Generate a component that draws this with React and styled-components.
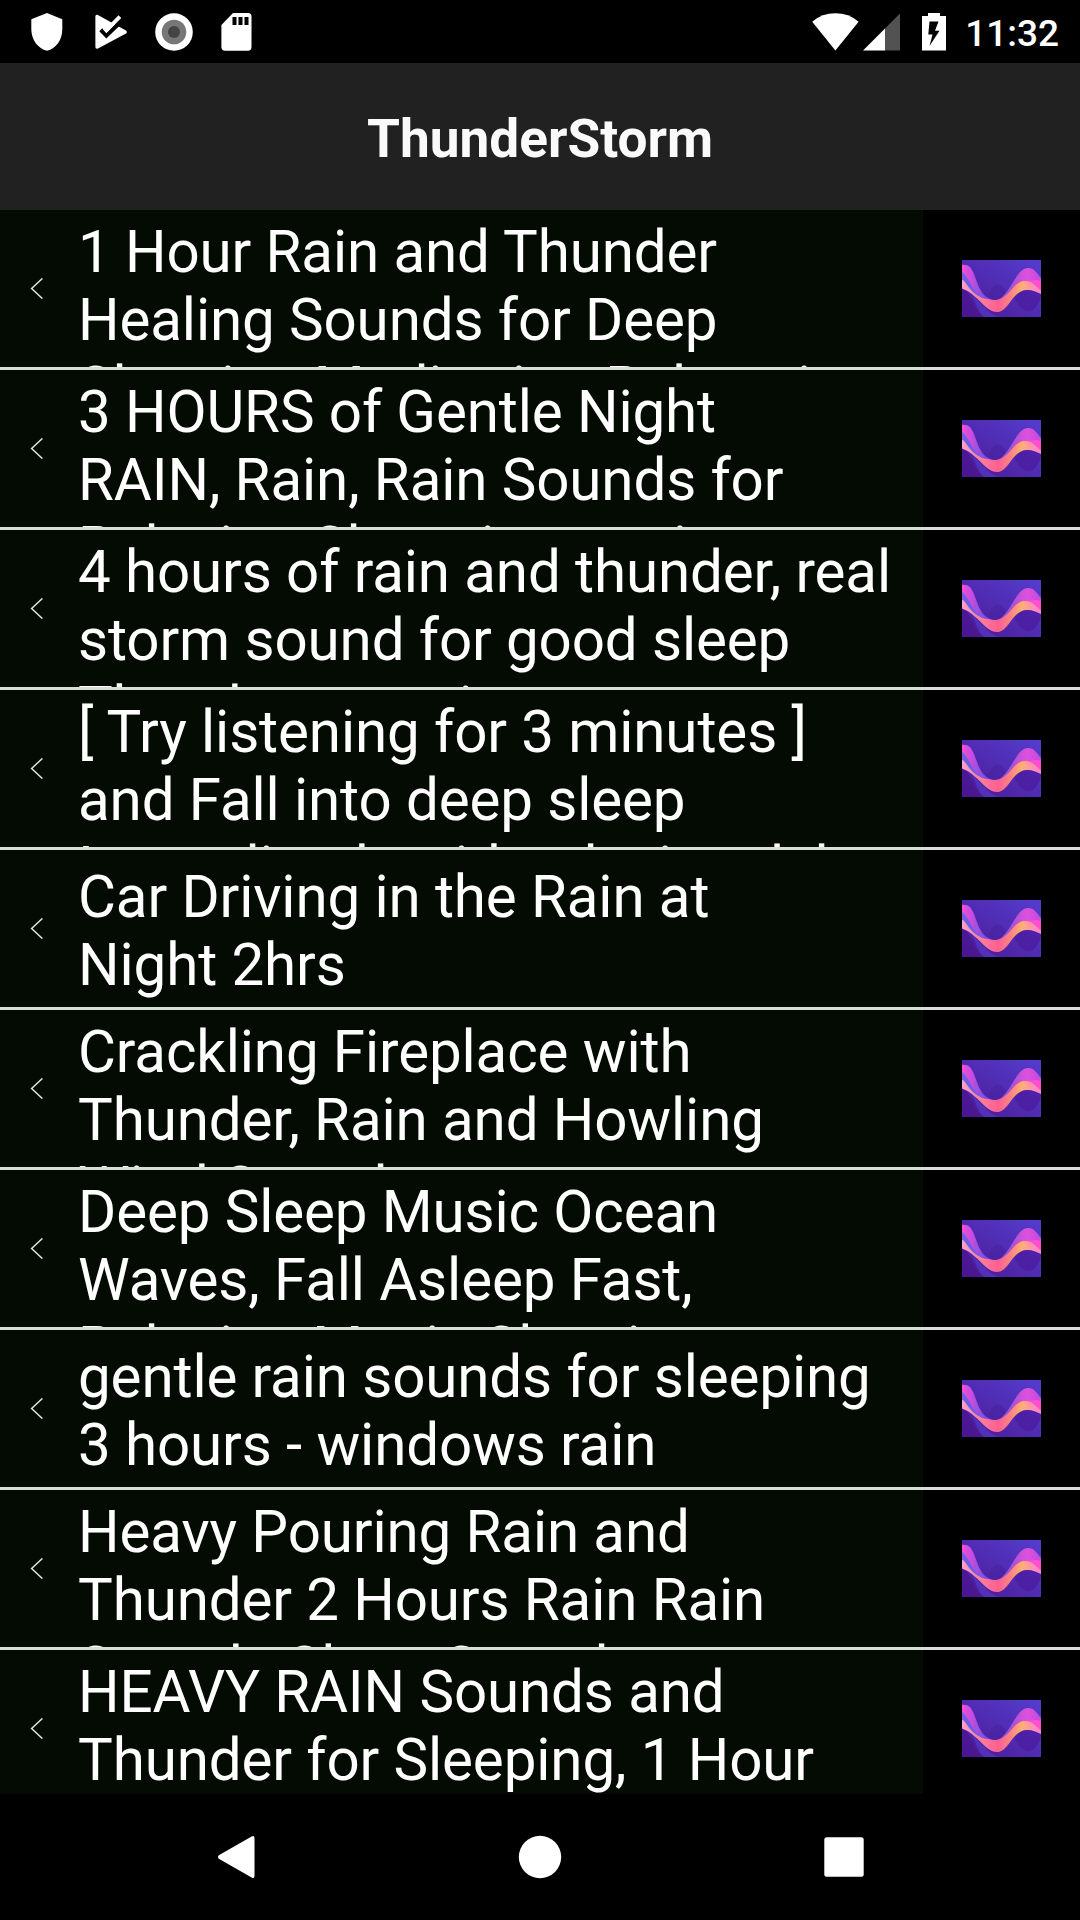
import React from "react";
import styled, { createGlobalStyle } from "styled-components";

// line breaks are kept as they are, rows only have room for two lines
const tracks = [
	"1 Hour Rain and Thunder\nHealing Sounds for Deep\nSleeping Meditation Relaxation",
	"3 HOURS of Gentle Night\nRAIN, Rain, Rain Sounds for\nRelaxing Sleep, insomnia",
	"4 hours of rain and thunder, real\nstorm sound for good sleep\nThunderstorm in",
	"[ Try listening for 3 minutes ]\nand Fall into deep sleep\nImmediately with relaxing delta",
	"Car Driving in the Rain at\nNight 2hrs",
	"Crackling Fireplace with\nThunder, Rain and Howling\nWind Sounds",
	"Deep Sleep Music Ocean\nWaves, Fall Asleep Fast,\nRelaxing Music Sleeping",
	"gentle rain sounds for sleeping\n3 hours - windows rain",
	"Heavy Pouring Rain and\nThunder 2 Hours Rain Rain\nSounds Sleep Sounds",
	"HEAVY RAIN Sounds and\nThunder for Sleeping, 1 Hour\nSleep Sounds",
];

const StatusBar = () => (
	<Status>
		<StatusGroup>
			<StatusIcon $w={32} $gap={31} viewBox="0 0 32 38">
				<path d="M16 0 31.3 6.3V16C31.3 27 25 35.5 16 37.8 7 35.5.3 27 .3 16V6.3Z" />
			</StatusIcon>
			<StatusIcon $w={33} $gap={28} viewBox="0 0 33 38">
				<path d="M3.4 1.8 32 17.6Q33.6 19.2 32 20.6L4 35.6Q1.4 36.4 1.4 34V3.5Q1.4 1.2 3.4 1.8Z" />
				<path d="M6.8 16.8 12.4 22.6 28 7.4" fill="none" stroke="#000" strokeWidth="4.2" />
				<path d="M10.4 15.2 12.4 17.4 25.9 3.7" fill="none" stroke="#fff" strokeWidth="3.8" />
			</StatusIcon>
			<StatusIcon $w={38} $gap={28} viewBox="0 0 38 38">
				<circle cx="19" cy="19" r="18.8" />
				<circle cx="19" cy="19" r="12.3" fill="#777" />
				<circle cx="19" cy="19" r="6" fill="#444" />
			</StatusIcon>
			<StatusIcon $w={31} $gap={0} viewBox="0 0 31 38">
				<path d="M12 0H27Q30.5 0 30.5 3.5V34Q30.5 37.7 27 37.7H4Q.4 37.7.4 34V12Z" />
				<path d="M11.5 4h4v8h-4zM17.5 4h4v8h-4zM23.5 4h4v8h-4z" fill="#000" />
			</StatusIcon>
		</StatusGroup>
		<StatusGroup>
			<StatusIcon $w={47} $gap={4} viewBox="0 0 47 38">
				<path d="M.2 8.7Q10 .3 23.4.3T46.6 8.7L23.4 37.5Z" />
			</StatusIcon>
			<StatusIcon $w={37} $gap={22} viewBox="0 0 37 38">
				<path d="M37 .5V37.5H22V15.5Z" fill="#525252" />
				<path d="M0 37.5 22 15.5V37.5Z" />
			</StatusIcon>
			<StatusIcon $w={24} $gap={19} viewBox="0 0 24 38">
				<path d="M6 0H18V3H24V37.5H0V3H6Z" />
				<path d="M7.5 8.5H16.5L13 17.8H17.5L7.5 33 10.5 21.5H6.3Z" fill="#000" />
			</StatusIcon>
			<Clock>11:32</Clock>
		</StatusGroup>
	</Status>
);

const Wave = () => (
	<Thumb viewBox="0 0 79 57">
		<defs>
			<linearGradient id="sky" x1="0" y1="1" x2="1" y2="0">
				<stop offset="0" stopColor="#4b1792" />
				<stop offset="0.5" stopColor="#502cb2" />
				<stop offset="1" stopColor="#543dcd" />
			</linearGradient>
			<linearGradient id="back" x1="0" y1="0" x2="1" y2="0">
				<stop offset="0" stopColor="#f24fd6" />
				<stop offset="0.12" stopColor="#c94be0" />
				<stop offset="0.28" stopColor="#7a52e0" />
				<stop offset="0.5" stopColor="#8f5ad8" />
				<stop offset="0.65" stopColor="#b04fd6" />
				<stop offset="0.82" stopColor="#dd52dc" />
				<stop offset="1" stopColor="#c44ae0" />
			</linearGradient>
			<linearGradient id="front" x1="0" y1="0" x2="1" y2="0">
				<stop offset="0" stopColor="#ff9fd0" />
				<stop offset="0.2" stopColor="#ff86a0" />
				<stop offset="0.45" stopColor="#ff5f90" />
				<stop offset="0.62" stopColor="#ff8480" />
				<stop offset="0.76" stopColor="#ffb072" />
				<stop offset="0.86" stopColor="#ff98a8" />
				<stop offset="1" stopColor="#ff80cc" />
			</linearGradient>
		</defs>
		<rect width="79" height="57" fill="url(#sky)" />
		<path d="M0 28C9 32 10 47 21 57H0Z" fill="#4a1590" opacity="0.7" />
		<path d="M10 34C14 44 16 52 22 57H38C28 55 22 46 10 34Z" fill="#5439c4" opacity="0.7" />
		<path d="M24 38C29 28 33 23 38 25S44 32 45 36L38 41Z" fill="#47209c" opacity="0.45" />
		<path d="M52 38C58 48 62 51 67 51S75 46 79 38V33C72 28 62 26 52 38Z" fill="#491899" opacity="0.6" />
		<path
			d="M0 5C6 4 9 7 12 14C17 27 20 39 33 40C47 40 53 8 66 8C72 8 75 13 79 18V33C70 26 60 24 52 31C45 38 41 46 34 46C22 46 10 32 0 26Z"
			fill="url(#back)"
		/>
		<path d="M0 12C6 16 10 30 20 39L8 32 0 26Z" fill="#5a63e2" opacity="0.85" />
		<path d="M64 23C69 20 74 19 79 21V32C74 26 70 24 64 23Z" fill="#ff4fd2" />
		<path
			d="M0 20C3 20 6 28 12 33C18 38 26 40 34 40C48 39 51 21 63 21C70 21 74 26 79 31V34C74 32 71 30 65 30C50 30 47 52 35 52C23 52 16 34 0 28.5Z"
			fill="url(#front)"
		/>
	</Thumb>
);

const Track = ({ title }) => (
	<Row>
		<Info>
			<Chevron viewBox="0 0 14 21">
				<path d="M12.4.4 1.6 10.5 12.4 20.6" />
			</Chevron>
			<Name>{title}</Name>
		</Info>
		<Art>
			<Wave />
		</Art>
	</Row>
);

const App = () => (
	<Screen>
		<GlobalStyle />
		<StatusBar />
		<Header>
			<Title>ThunderStorm</Title>
		</Header>
		<List>
			{tracks.map((title) => (
				<Track key={title} title={title} />
			))}
		</List>
		<NavBar>
			<NavIcon viewBox="0 0 44 44">
				<path d="M40.5 3.2V40.8Q40.5 44.4 37.6 42.4L4.8 23.8Q3.2 22 4.8 20.2L37.6 1.6Q40.5-.4 40.5 3.2Z" />
			</NavIcon>
			<NavIcon viewBox="0 0 44 44">
				<circle cx="22" cy="22" r="21.2" />
			</NavIcon>
			<NavIcon viewBox="0 0 44 44">
				<rect x="2.3" y="2.2" width="39.4" height="39.6" rx="2.5" />
			</NavIcon>
		</NavBar>
	</Screen>
);

export default App;

const GlobalStyle = createGlobalStyle`
	* {
		box-sizing: border-box;
	}
	body {
		margin: 0;
		background: #000;
		font-family: Roboto, sans-serif;
	}
`;

const Screen = styled.div`
	display: flex;
	flex-direction: column;
	width: 1080px;
	height: 1920px;
	overflow: hidden;
	background: #000;
	color: #fff;
`;

const Status = styled.div`
	display: flex;
	flex: none;
	justify-content: space-between;
	height: 63px;
	padding: 0 21px 0 31px;
`;

const StatusGroup = styled.div`
	display: flex;
	align-items: center;
`;

const StatusIcon = styled.svg`
	flex: none;
	width: ${({ $w }) => $w}px;
	height: 38px;
	margin-right: ${({ $gap }) => $gap}px;
	fill: #fff;
`;

const Clock = styled.span`
	font-size: 37px;
	font-weight: 500;
	line-height: 43px;
	padding-top: 3px;
`;

const Header = styled.div`
	display: flex;
	flex: none;
	align-items: center;
	justify-content: center;
	height: 147px;
	background: #212121;
`;

const Title = styled.h1`
	margin: 0;
	padding-top: 5px;
	font-size: 53.2px;
	font-weight: 700;
	line-height: 62px;
	color: #fafafa;
`;

const List = styled.div`
	flex: 1;
	min-height: 0;
	overflow: hidden;
`;

const Row = styled.div`
	display: flex;
	height: 160px;
	border-bottom: 3px solid #d9ddd8;
`;

const Info = styled.div`
	display: flex;
	align-items: center;
	width: 923px;
	padding-left: 30px;
	background: #040b03;
`;

const Chevron = styled.svg`
	flex: none;
	width: 14px;
	height: 21px;
	margin-right: 34px;
	fill: none;
	stroke: #dde0da;
	stroke-width: 1.5;
`;

const Name = styled.div`
	display: flex;
	flex: 1;
	align-items: safe center;
	height: 157px;
	padding: 8px 20px 4px 0;
	overflow: hidden;
	font-size: 58.3px;
	letter-spacing: -0.12px;
	line-height: 68px;
	white-space: pre-line;
`;

const Art = styled.div`
	display: flex;
	flex: 1;
	align-items: center;
	justify-content: center;
`;

const Thumb = styled.svg`
	width: 79px;
	height: 57px;
`;

const NavBar = styled.div`
	display: flex;
	flex: none;
	align-items: center;
	justify-content: center;
	gap: 260px;
	height: 126px;
`;

const NavIcon = styled.svg`
	width: 44px;
	height: 44px;
	fill: #fff;
`;
